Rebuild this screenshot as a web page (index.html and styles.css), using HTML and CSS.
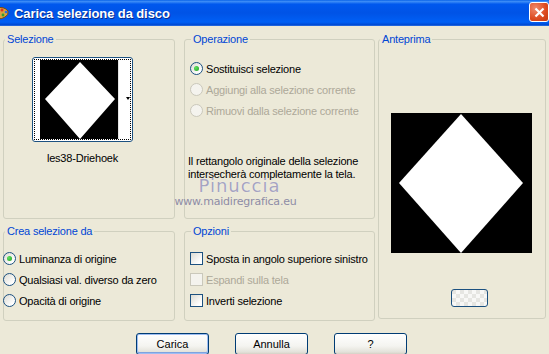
FILE: index.html
```html
<!DOCTYPE html>
<html lang="it">
<head>
    <meta charset="UTF-8">
    <title>Carica selezione da disco</title>
    <link rel="stylesheet" href="styles.css">
</head>
<body>
    <div class="window">
        <div class="titlebar">
            <svg class="app-icon" width="9" height="14" viewBox="0 0 9 14">
                <path d="M-4 2 Q4 0 8 5 Q9 9 5 11 Q3 13 -4 13 Z" fill="#D9A441" stroke="#7A4A10" stroke-width="1"/>
                <circle cx="2" cy="4" r="1.5" fill="#E03020"/>
                <circle cx="6" cy="6" r="1.3" fill="#2A6CE0"/>
                <circle cx="3" cy="9" r="1.4" fill="#30A030"/>
            </svg>
            <span class="title">Carica selezione da disco</span>
            <div class="close">
                <svg width="11" height="11" viewBox="0 0 11 11"><path d="M1.5 1.5 L9.5 9.5 M9.5 1.5 L1.5 9.5" stroke="#fff" stroke-width="2.2"/></svg>
            </div>
        </div>

        <div class="panes">
            <fieldset class="group g-sel">
                <legend>Selezione</legend>
                <div class="thumb">
                    <div class="thumb-focus">
                        <svg class="thumb-img" width="78" height="79" viewBox="0 0 78 79">
                            <rect width="78" height="79" fill="#000"/>
                            <polygon points="40,2 75,39 40,79 5,39" fill="#fff"/>
                        </svg>
                        <div class="thumb-strip"><span class="arrow"></span></div>
                    </div>
                </div>
                <div class="thumb-name">les38-Driehoek</div>
            </fieldset>

            <fieldset class="group g-op">
                <legend>Operazione</legend>
                <div class="options">
                    <div class="opt"><span class="radio checked"></span>Sostituisci selezione</div>
                    <div class="opt disabled"><span class="radio"></span>Aggiungi alla selezione corrente</div>
                    <div class="opt disabled"><span class="radio"></span>Rimuovi dalla selezione corrente</div>
                </div>
                <p class="note">Il rettangolo originale della selezione<br>intersecherà completamente la tela.</p>
            </fieldset>

            <fieldset class="group g-prev">
                <legend>Anteprima</legend>
                <svg class="preview" width="141" height="140" viewBox="0 0 141 140">
                    <rect width="141" height="140" fill="#000"/>
                    <polygon points="70,1 132,70 70,140 8,70" fill="#fff"/>
                </svg>
                <div class="mini-btn"></div>
            </fieldset>

            <fieldset class="group g-crea">
                <legend>Crea selezione da</legend>
                <div class="options">
                    <div class="opt"><span class="radio checked"></span>Luminanza di origine</div>
                    <div class="opt"><span class="radio"></span>Qualsiasi val. diverso da zero</div>
                    <div class="opt"><span class="radio"></span>Opacità di origine</div>
                </div>
            </fieldset>

            <fieldset class="group g-opz">
                <legend>Opzioni</legend>
                <div class="options">
                    <div class="opt"><span class="check"></span>Sposta in angolo superiore sinistro</div>
                    <div class="opt disabled"><span class="check"></span>Espandi sulla tela</div>
                    <div class="opt"><span class="check"></span>Inverti selezione</div>
                </div>
            </fieldset>
        </div>

        <div class="actions">
            <button class="btn default">Carica</button>
            <button class="btn">Annulla</button>
            <button class="btn">?</button>
        </div>

        <div class="watermark">
            <span class="wm-name">Pinuccia</span>
            <span class="wm-site">www.maidiregrafica.eu</span>
        </div>
    </div>
</body>
</html>
```

FILE: styles.css
```css
* { margin: 0; padding: 0; box-sizing: border-box; }
body { width: 549px; height: 354px; overflow: hidden; background: #ECE9D8; font: 11px "Liberation Sans", Arial, sans-serif; letter-spacing: -0.2px; color: #000; }
.window { position: relative; height: 354px; background: #ECE9D8; }

/* title bar */
.titlebar { height: 26px; display: flex; align-items: center; background: linear-gradient(#0A63E8 0, #3C8CF7 6%, #0058EE 16%, #0053E6 50%, #0060F5 85%, #0048D0 96%, #3A7CE8 100%); }
.app-icon { margin-right: 5px; }
.title { color: #fff; font-weight: bold; font-size: 13px; letter-spacing: -0.1px; text-shadow: 1px 1px 0 #0A2C8C; }
.close { margin-left: auto; align-self: flex-start; margin-top: 2px; width: 20px; height: 20px; border: 1px solid #fff; border-radius: 3px; background: radial-gradient(circle at 30% 30%, #F08A6C, #DC4A1F 60%, #C33A12); display: flex; align-items: center; justify-content: center; }

/* group boxes */
.panes { display: grid; grid-template-columns: 172px 9px 191px 3px 168px; grid-template-rows: 186px 96px; row-gap: 6px; padding: 7px 0 0 3px; }
.group { border: 1px solid #D0D0BF; border-radius: 3px; padding: 0; min-width: 0; }
.group legend { color: #0046D5; margin-left: 1px; padding: 0 2px; line-height: 13px; }
.g-sel { grid-column: 1; grid-row: 1; }
.g-op { grid-column: 3; grid-row: 1; padding-left: 5px; }
.g-prev { grid-column: 5; grid-row: 1 / 3; height: 286px; }
.g-crea { grid-column: 1; grid-row: 2; }
.g-opz { grid-column: 3; grid-row: 2; padding-left: 5px; }

/* thumbnail picker */
.thumb { width: 101px; height: 85px; margin: 11px 0 0 28px; border: 1px solid #1C5180; border-radius: 3px; background: #fff; padding: 1px; }
.thumb-focus { height: 100%; border: 1px dotted #000; display: flex; padding-left: 5px; }
.thumb-img { display: block; }
.thumb-strip { flex: 1; display: flex; align-items: center; justify-content: flex-end; border-left: 1px solid #E4E4E4; padding-bottom: 3px; }
.arrow { width: 0; height: 0; border-left: 2px solid transparent; border-right: 2px solid transparent; border-top: 3px solid #000; }
.thumb-name { width: 101px; margin: 10px 0 0 28px; text-align: center; line-height: 13px; }

/* radios and checks */
.options { margin-top: 12px; }
.g-crea .options, .g-opz .options { margin-top: 10px; }
.g-crea .options { margin-left: -1px; }
.opt { height: 21px; display: flex; align-items: center; gap: 3px; white-space: nowrap; }
.opt.disabled { color: #ACA899; }
.radio { position: relative; width: 13px; height: 13px; flex: none; border: 1px solid #1C5180; border-radius: 50%; background: linear-gradient(135deg, #DCDBD3, #FFFFFF 80%); }
.radio.checked::after { content: ""; position: absolute; left: 3px; top: 3px; width: 5px; height: 5px; border-radius: 50%; background: radial-gradient(circle at 35% 35%, #5FE05F, #21A121); }
.disabled .radio, .disabled .check { border-color: #CAC8BB; background: #F4F3EE; }
.check { width: 13px; height: 13px; flex: none; border: 1px solid #1C5180; background: linear-gradient(135deg, #DCDBD3, #FFFFFF 80%); }

.note { margin-top: 34px; margin-left: -2px; line-height: 13px; }

/* preview */
.preview { display: block; margin: 67px 0 0 12px; }
.mini-btn { width: 37px; height: 18px; margin: 36px 0 0 72px; border: 1px solid #1C5180; border-radius: 3px; background: repeating-conic-gradient(#F8F8F6 0 25%, #E6E6E2 0 50%) 0 0 / 8px 8px; }

/* buttons */
.actions { display: flex; gap: 26px; padding-left: 136px; margin-top: 12px; }
.btn { width: 73px; height: 22px; border: 1px solid #003C74; border-radius: 3px; background: linear-gradient(#FFFFFF, #F4F4F0 60%, #E3E2DA 90%, #D6D0C5); font: 11px "Liberation Sans", Arial, sans-serif; color: #000; }
.btn.default { box-shadow: inset 0 0 0 1px #9DBDF2, inset 0 -1px 0 1px #7EA3E0; }

/* watermark */
.watermark { position: absolute; left: 173px; top: 178px; width: 125px; display: flex; flex-direction: column; align-items: center; pointer-events: none; }
.wm-name { margin-left: 8px; font: 18px/15px "DejaVu Sans", sans-serif; letter-spacing: 1px; color: #A6A4C0; text-shadow: 0 0 1px #fff; }
.wm-site { margin-top: 3px; font: 11px/12px "DejaVu Sans", sans-serif; color: #8E8CA6; }
```
